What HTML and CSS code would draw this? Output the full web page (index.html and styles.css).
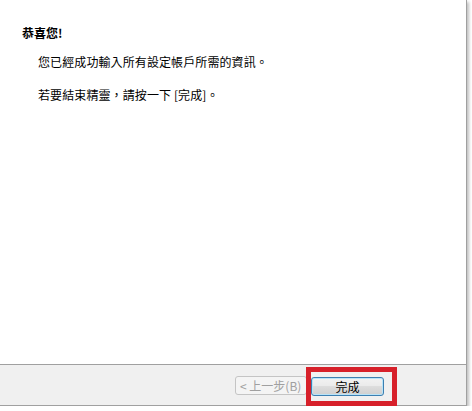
FILE: index.html
```html
<!DOCTYPE html>
<html lang="zh-Hant">
<head>
  <meta charset="UTF-8" />
  <title>完成</title>
  <link rel="stylesheet" href="styles.css">
</head>
<body>
  <div class="wizard">
    <div class="wizard-body">
      <h1>恭喜您!</h1>
      <p>您已經成功輸入所有設定帳戶所需的資訊。</p>
      <p>若要結束精靈，請按一下 [完成]。</p>
    </div>
    <div class="wizard-footer">
      <button class="btn" disabled>&lt; 上一步(B)</button>
      <div class="highlight">
        <button class="btn primary">完成</button>
      </div>
    </div>
  </div>
</body>
</html>
```

FILE: styles.css
```css
body {
  margin: 0;
  padding: 0;
  background-color: #fff;
  font-family: "Noto Sans CJK TC", "Liberation Sans", sans-serif;
  font-size: 12px;
  color: #000;
}
.wizard {
  width: 467px;
  height: 406px;
  border-right: 1px solid #a0a0a0;
  border-bottom: 1px solid #a0a0a0;
  box-shadow: 2px 2px 3px rgba(0, 0, 0, 0.25);
  display: flex;
  flex-direction: column;
  box-sizing: border-box;
}
.wizard-body {
  flex: 1;
  padding: 25px 0 0 22px;
  border-bottom: 1px solid #a0a0a0;
}
.wizard-body h1 {
  font-size: 12px;
  font-weight: bold;
  margin: 0 0 13px 0;
  line-height: 16px;
}
.wizard-body p {
  margin: 0 0 17px 16px;
  line-height: 16px;
  letter-spacing: 0.1px;
}
.wizard-footer {
  height: 40px;
  background-color: #f0f0f0;
  display: flex;
  align-items: center;
  padding-left: 235px;
  position: relative;
}
.btn {
  font-family: inherit;
  font-size: 12px;
  height: 19px;
  padding: 0;
  border: 1px solid #adadad;
  border-radius: 3px;
  background: linear-gradient(#f6f6f6, #dddddd);
  color: #000;
}
.btn[disabled] {
  width: 72px;
  background: #f4f4f4;
  color: #a0a0a0;
  border-color: #c4c4c4;
  text-align: left;
  padding-left: 4px;
}
.highlight {
  position: absolute;
  left: 306px;
  top: 2px;
  width: 81px;
  height: 29px;
  border: 5px solid #d7202a;
  display: flex;
  align-items: center;
  justify-content: flex-start;
  background: transparent;
}
.btn.primary {
  width: 73px;
  margin-left: 0;
  border-color: #3c7fb1;
  background: linear-gradient(#f2f2f2 0%, #ebebeb 45%, #dddddd 50%, #cfcfcf 100%);
  box-shadow: inset 0 0 0 1px #b8e3f8;
}
```
